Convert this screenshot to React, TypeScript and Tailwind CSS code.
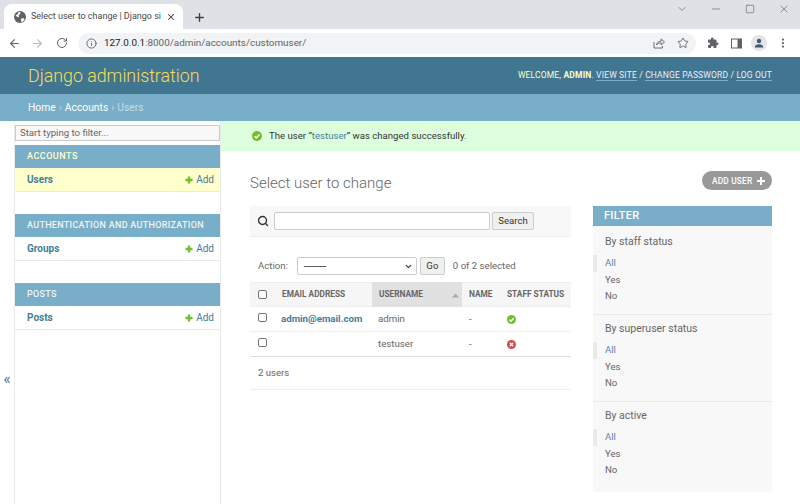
import React from 'react';
import { ArrowLeft, ArrowRight, RotateCw, Info, Star, X, Plus, Minus, Square, ChevronDown, MoreVertical, Search } from 'lucide-react';

const AppRow = ({ name, selected }: { name: string; selected?: boolean }) => (
  <div className={`flex items-center justify-between h-6 pl-3 pr-[6px] border-b border-[#eaeaea] ${selected ? 'bg-[#ffc]' : ''}`}>
    <span className="font-bold text-[10px] text-[#447e9b]">{name}</span>
    <span className="flex items-center gap-[3px] text-[10px] text-[#447e9b]">
      <svg width="8" height="8" viewBox="0 0 9 9"><path d="M3.2 0.5h2.6v2.7h2.7v2.6H5.8v2.7H3.2V5.8H0.5V3.2h2.7z" fill="#70bf2b" /></svg>
      Add
    </span>
  </div>
);

const AppModule = ({ caption, name, selected, last }: { caption: string; name: string; selected?: boolean; last?: boolean }) => (
  <div className={last ? '' : 'mb-[22px]'}>
    <div className="h-[23px] bg-[#79aec8] pl-3 flex items-center text-[9px] font-medium whitespace-nowrap">
      <span className={selected ? 'text-[#ffc] tracking-[0.5px]' : 'text-[#eef3f6] tracking-[0.3px]'}>{caption}</span>
    </div>
    <AppRow name={name} selected={selected} />
  </div>
);

const FilterGroup = ({ title, first, last }: { title: string; first?: boolean; last?: boolean }) => (
  <div className={`${first ? 'h-[89px] pt-[9px]' : 'h-[87px] pt-[7px]'} ${last ? '' : 'border-b border-[#eaeaea]'}`}>
    <div className="pl-[12px] text-[10.5px] leading-[14px] text-[#666]">{title}</div>
    <div className="mt-[6px] text-[9.6px] leading-[16.5px] text-[#666]">
      <div className="border-l-[4px] border-[#eaeaea] pl-[8px] text-[#5b80b2]">All</div>
      <div className="pl-[12px]">Yes</div>
      <div className="pl-[12px]">No</div>
    </div>
  </div>
);

const Checkbox = () => <span className="block w-[9px] h-[9px] rounded-[2px] border border-[#767676] bg-white" />;

const CtlSlot = ({ children }: { children: React.ReactNode }) => (
  <span className="w-[34px] flex items-center justify-center">{children}</span>
);

export default function App() {
  return (
    <div className="w-[800px] h-[504px] overflow-hidden bg-white flex flex-col font-['Roboto',sans-serif] text-[#333]">
      {/* browser tab strip */}
      <div className="h-[29px] bg-[#dee1e6] flex items-end shrink-0 text-[#3c4043]">
        <div className="ml-[4px] w-[179px] h-[25px] bg-white rounded-t-[8px] flex items-center pl-[10px] pr-[7px]">
          <svg width="12" height="12" viewBox="0 0 12 12" className="shrink-0">
            <circle cx="6" cy="6" r="6" fill="#5f6368" />
            <path d="M1.5 4.5L4 3l.5-2 2 .2L6 3 4.5 4.5 5 6.2 3.5 6zM7 7.5l2.7-.3.8 1.2L8.500 11l-1.300-.2z" fill="#fff" />
          </svg>
          <span className="ml-[5px] flex-1 whitespace-nowrap text-[9px] text-[#45484c]">Select user to change | Django si</span>
          <X size={10} strokeWidth={2.5} className="shrink-0" />
        </div>
        <Plus size={13} strokeWidth={2.5} className="ml-[10px] mb-[5px]" />
        <div className="flex-1" />
        <div className="self-start mt-[3px] -mr-px flex items-center text-[#5f6368]">
          <CtlSlot><ChevronDown size={12} strokeWidth={1.3} /></CtlSlot>
          <CtlSlot><Minus size={12} strokeWidth={1.3} /></CtlSlot>
          <CtlSlot><Square size={10} strokeWidth={1.5} /></CtlSlot>
          <CtlSlot><X size={12} strokeWidth={1.3} /></CtlSlot>
        </div>
      </div>
      {/* toolbar */}
      <div className="h-[28px] bg-white flex items-center shrink-0">
        <ArrowLeft size={13} strokeWidth={2} className="ml-[8px] text-[#5f6368]" />
        <ArrowRight size={13} strokeWidth={2} className="ml-[10px] text-[#b9bcc0]" />
        <RotateCw size={12} strokeWidth={2} className="ml-[12px] text-[#5f6368]" />
        <div className="ml-[10px] w-[618px] h-[21px] rounded-full bg-[#f1f3f4] flex items-center pl-[8px] pr-[7px]">
          <Info size={11} strokeWidth={2} className="text-[#5f6368]" />
          <span className="ml-[7px] flex-1 text-[9.9px] text-[#5f6368]"><span className="text-[#202124]">127.0.0.1</span>:8000/admin/accounts/customuser/</span>
          <svg width="12" height="12" viewBox="0 0 12 12" fill="none" stroke="#5f6368" strokeWidth="0.9" className="mr-[12px]">
            <path d="M1 5v6h8.5V9" />
            <path d="M3.5 8c.3-2.6 2.3-3.8 4.7-3.8V2l3.3 3-3.3 3V5.8C6.2 5.8 4.7 6.5 3.5 8z" />
          </svg>
          <Star size={12} strokeWidth={1.8} className="text-[#5f6368]" />
        </div>
        <svg width="12" height="12" viewBox="0 0 24 24" className="ml-[11px]"><path d="M20.5 11H19V7a2 2 0 0 0-2-2h-4V3.5a2.5 2.5 0 0 0-5 0V5H4a2 2 0 0 0-2 2v3.8h1.5a2.7 2.7 0 0 1 0 5.4H2V20a2 2 0 0 0 2 2h3.8v-1.5a2.7 2.7 0 0 1 5.4 0V22H17a2 2 0 0 0 2-2v-4h1.5a2.5 2.5 0 0 0 0-5z" fill="#5f6368" /></svg>
        <svg width="11" height="11" viewBox="0 0 11 11" className="ml-[12px]"><rect x="0.5" y="1" width="10" height="9" fill="#fff" stroke="#5f6368" /><rect x="6.5" y="1" width="4" height="9" fill="#5f6368" /></svg>
        <span className="ml-[9px] w-[16px] h-[16px] rounded-full bg-[#e3e5e9] flex items-center justify-center">
          <svg width="10" height="10" viewBox="0 0 10 10"><circle cx="5" cy="3" r="2.2" fill="#45566e" /><path d="M0.8 9.5c0-2.3 2-3.2 4.2-3.2s4.2.9 4.2 3.2z" fill="#45566e" /></svg>
        </span>
        <MoreVertical size={12} strokeWidth={2.5} className="ml-[10px] text-[#5f6368]" />
      </div>
      {/* admin header */}
      <div className="h-[37px] bg-[#417690] flex items-center justify-between pl-[28px] pr-[28px] shrink-0">
        <span className="pt-px text-[17.8px] font-light text-[#f5dd5d]">Django administration</span>
        <span className="text-[8.5px] text-[#ffc] tracking-[0.16px] whitespace-nowrap">
          WELCOME, <b className="font-bold">ADMIN</b>. <span className="text-[#eef] border-b border-[#79aec8]">VIEW SITE</span> / <span className="text-[#eef] border-b border-[#79aec8]">CHANGE PASSWORD</span> / <span className="text-[#eef] border-b border-[#79aec8]">LOG OUT</span>
        </span>
      </div>
      {/* breadcrumbs */}
      <div className="h-[27px] bg-[#79aec8] flex items-center pl-[28px] text-[10.3px] text-white shrink-0">
        Home<span className="mx-[3px] text-[#c4dce8]">›</span>Accounts<span className="mx-[3px] text-[#c4dce8]">›</span><span className="text-[#c4dce8]">Users</span>
      </div>
      {/* main */}
      <div className="flex-1 flex min-h-0">
        <div className="w-[15px] shrink-0 border-r border-[#eaeaea] flex items-center justify-center pt-[133px] text-[#447e9b] text-[16px] leading-none">«</div>
        <div className="w-[206px] shrink-0 border-r border-[#eaeaea] pt-[4px]">
          <div className="h-[16px] mb-[4px] border border-[#ccc] bg-[#f8f8f8] pl-1 flex items-center text-[9.6px] text-[#666]">Start typing to filter...</div>
          <AppModule caption="ACCOUNTS" name="Users" selected />
          <AppModule caption="AUTHENTICATION AND AUTHORIZATION" name="Groups" />
          <AppModule caption="POSTS" name="Posts" last />
        </div>
        <div className="flex-1 min-w-0">
          <div className="h-[30px] bg-[#dfd] flex items-center pl-[31px] text-[9.6px] text-[#333]">
            <svg width="10" height="10" viewBox="0 0 10 10" className="mr-[7px]"><circle cx="5" cy="5" r="5" fill="#70bf2b" /><path d="M2.6 5.2l1.7 1.7 3.2-3.4" stroke="#fff" strokeWidth="1.5" fill="none" /></svg>
            The user “<span className="text-[#447e9b]">testuser</span>” was changed successfully.
          </div>
          <div className="pl-[29px] pr-[28px]">
            <div className="h-[55px] flex items-start justify-between">
              <span className="mt-[23px] text-[15px] leading-[18px] font-light text-[#666]">Select user to change</span>
              <span className="mt-[20px] w-[70px] h-[19px] rounded-full bg-[#999] flex items-center justify-between pl-[10px] pr-[7px] pt-px text-[8.3px] font-medium text-white tracking-[0.2px]">
                ADD USER
                <svg width="8" height="8" viewBox="0 0 8 8"><path d="M3 0h2v3h3v2H5v3H3V5H0V3h3z" fill="#fff" /></svg>
              </span>
            </div>
            <div className="flex justify-between">
              <div className="w-[321px]">
                <div className="h-[31px] bg-[#f8f8f8] border-b border-[#eee] flex items-center pl-[7px]">
                  <Search size={12} strokeWidth={2.8} className="text-[#333]" />
                  <span className="ml-[5px] block w-[216px] h-[18px] bg-white border border-[#ccc] rounded-[2px]" />
                  <span className="ml-[2px] h-[18px] w-[42px] flex items-center justify-center bg-[#f0f0f0] border border-[#ccc] rounded-[2px] text-[9.6px] text-[#333]">Search</span>
                </div>
                <div className="h-[18px] mt-[20px] mb-[7px] flex items-center pl-[8px] text-[9.6px] text-[#666]">
                  Action:
                  <span className="ml-[9px] w-[120px] h-[18px] bg-white border border-[#ccc] rounded-[2px] flex items-center justify-between pl-[6px] pr-[3px] text-[10px] text-[#333]">
                    <span className="tracking-[-0.3px]">---------</span>
                    <ChevronDown size={9} strokeWidth={3} />
                  </span>
                  <span className="ml-[3px] h-[18px] w-[25px] flex items-center justify-center bg-[#f0f0f0] border border-[#ccc] rounded-[2px] text-[#333]">Go</span>
                  <span className="ml-[8px]">0 of 2 selected</span>
                </div>
                <div className="grid grid-cols-[25px_97px_90px_41px_68px]">
                  <div className="h-[25px] bg-[#f6f6f6] border-y border-[#eee] flex items-center pl-[8px] pb-px"><Checkbox /></div>
                  <div className="h-[25px] bg-[#f6f6f6] border-y border-[#eee] flex items-center pl-[7px] pb-px text-[8.3px] font-bold text-[#666] whitespace-nowrap">EMAIL ADDRESS</div>
                  <div className="h-[25px] bg-[#e1e1e1] flex items-center justify-between pl-[7px] pr-[3px] pb-px text-[8.3px] font-bold text-[#666]">USERNAME
                    <svg width="7" height="5" viewBox="0 0 7 5" className="mt-[3px]"><path d="M3.5 0.5L7 4.5H0z" fill="#aaa" /></svg>
                  </div>
                  <div className="h-[25px] bg-[#f6f6f6] border-y border-[#eee] flex items-center pl-[7px] pb-px text-[8.3px] font-bold text-[#666]">NAME</div>
                  <div className="h-[25px] bg-[#f6f6f6] border-y border-[#eee] flex items-center pl-[4px] pb-px text-[8.3px] font-bold text-[#666] whitespace-nowrap">STAFF STATUS</div>

                  <div className="h-[25px] border-b border-[#eee] flex items-center pl-[8px] pb-[3px]"><Checkbox /></div>
                  <div className="h-[25px] border-b border-[#eee] flex items-center pl-[6px] text-[9.7px] font-bold text-[#447e9b] whitespace-nowrap">admin@email.com</div>
                  <div className="h-[25px] border-b border-[#eee] flex items-center pl-[6px] text-[9.7px] text-[#666]">admin</div>
                  <div className="h-[25px] border-b border-[#eee] flex items-center pl-[7px] text-[9.7px] text-[#666]">-</div>
                  <div className="h-[25px] border-b border-[#eee] flex items-center pl-[4px]">
                    <svg width="9" height="9" viewBox="0 0 10 10"><circle cx="5" cy="5" r="5" fill="#70bf2b" /><path d="M2.6 5.2l1.7 1.7 3.2-3.4" stroke="#fff" strokeWidth="1.6" fill="none" /></svg>
                  </div>

                  <div className="h-[25px] border-b border-[#ddd] flex items-center pl-[8px] pb-[3px]"><Checkbox /></div>
                  <div className="h-[25px] border-b border-[#ddd]" />
                  <div className="h-[25px] border-b border-[#ddd] flex items-center pl-[6px] text-[9.7px] text-[#666]">testuser</div>
                  <div className="h-[25px] border-b border-[#ddd] flex items-center pl-[7px] text-[9.7px] text-[#666]">-</div>
                  <div className="h-[25px] border-b border-[#ddd] flex items-center pl-[4px]">
                    <svg width="9" height="9" viewBox="0 0 10 10"><circle cx="5" cy="5" r="5" fill="#dd4646" /><path d="M3.2 3.2l3.6 3.6M6.8 3.2l-3.6 3.6" stroke="#fff" strokeWidth="1.6" /></svg>
                  </div>
                </div>
                <div className="h-[33px] flex items-center pl-[8px] pt-px border-b border-[#eee] text-[9.6px] text-[#666]">2 users</div>
              </div>
              <div className="w-[179px] h-[286px] bg-[#f8f8f8]">
                <div className="h-[20px] bg-[#79aec8] pl-[11px] pt-px flex items-center text-[11px] font-medium tracking-[0.3px] text-white">FILTER</div>
                <FilterGroup title="By staff status" first />
                <FilterGroup title="By superuser status" />
                <FilterGroup title="By active" last />
              </div>
            </div>
          </div>
        </div>
      </div>
    </div>
  );
}
